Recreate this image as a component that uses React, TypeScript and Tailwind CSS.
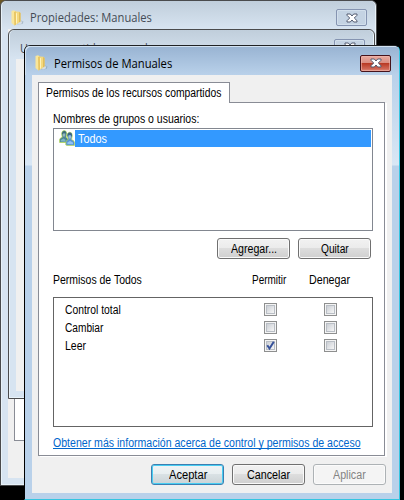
import { useLayoutEffect, useRef, useState } from 'react';

type LabelProps = { text: string; width: number; className?: string };

// A single line of text condensed or stretched to an exact width.
function Label({ text, width, className = '' }: LabelProps) {
  const ref = useRef<HTMLSpanElement>(null);
  const [scale, setScale] = useState(1);
  useLayoutEffect(() => {
    if (ref.current) setScale(width / ref.current.offsetWidth);
  }, [text, width]);
  return (
    <span className={`block h-4 shrink-0 whitespace-nowrap leading-4 ${className}`} style={{ width }}>
      <span ref={ref} className="inline-block origin-left" style={{ transform: `scaleX(${scale})` }}>
        {text}
      </span>
    </span>
  );
}

function FolderIcon() {
  return (
    <svg viewBox="0 0 16 16" className="block size-4 shrink-0">
      <path d="M8 14.5 12 10.5 14.5 11.5 13.5 14Z" fill="#64819c" opacity=".4" />
      <path d="M2.5 1 5 .3 7 1.5V14.5L5.5 15.5 2.5 13Z" fill="#f9e69a" />
      <path d="M5.2 2 6.8 1.3V14.7L5.5 15.5Z" fill="#e3bd58" />
      <path d="M6.8 1.6 10.5 1.8 11.5 3V12.2L7 14.5Z" fill="#f4d97e" />
      <path d="M7 3 8 3.2V13L7 14Z" fill="#fff3bd" />
      <path d="M10.2 2 11.5 3V12.2L10.2 12.8Z" fill="#dcb654" />
      <path d="M9 13.2 12 11.2 13.5 11.5 12.5 13.8 9.5 14.5Z" fill="#d6dde2" />
    </svg>
  );
}

function UsersIcon() {
  return (
    <svg viewBox="0 0 16 16" className="block size-4 shrink-0">
      <g stroke="#b9dd4a" strokeWidth=".7">
        <path d="M.6 12.5V9.5Q1 7.8 3.2 7.3L2.6 3.6Q3 .6 5.2.6T7.8 3.6L7.2 7.2 9.5 9.5V12.5Z" fill="#4b8496" />
        <path d="M6.8 15V12Q7 10.3 9.2 9.6L8.2 5.6Q8.4 2.2 10.8 2.2T13.3 5.6L12.6 9.6Q15.4 10.4 15.5 12.6V15.4H8Z" fill="#5893d2" />
      </g>
      <path d="M8.3 5.4Q8.6 2.6 10.8 2.6T13 5.4L12.6 7 11.8 5H9.6L9 7Z" fill="#3d6580" />
      <path d="M3 3.6Q3.3 1 5.2 1T7.4 3.4L6.4 3 4 4.6Z" fill="#3d6b78" />
      <ellipse cx="5" cy="5" rx="1.3" ry="1.8" fill="#93b7bd" />
      <ellipse cx="10.8" cy="7" rx="1.3" ry="1.8" fill="#9dbfd8" />
      <path d="M1.8 11.5V10L4.5 8.5 6.5 10V11.8Z" fill="#7db6c2" />
      <path d="M8.4 14V12.4L11 11 14 12.4V14.3Z" fill="#8fc1f4" />
    </svg>
  );
}

function CloseGlyph() {
  return (
    <svg viewBox="0 0 12 10" className="block h-[10px] w-3">
      <path d="M1 1H4.3L6 3 7.7 1H11V2.3L8.3 5 11 7.7V9H7.7L6 7 4.3 9H1V7.7L3.7 5 1 2.3Z" fill="#fff" stroke="#535b70" strokeWidth="1" />
    </svg>
  );
}

function CloseButton({ active = false }: { active?: boolean }) {
  return (
    <div
      className={`flex h-[17px] w-[31px] shrink-0 items-center justify-center rounded-[2px] border ${
        active
          ? 'border-[#46131b] bg-[linear-gradient(#e9aaa0_0%,#d98c80_47%,#b93a25_50%,#cf6655_85%,#df8b7c_100%)] shadow-[inset_0_0_0_1px_#f0b7ad99]'
          : 'border-[#8594b1] bg-[#c4d3e3] shadow-[inset_0_0_0_1px_#dce7f199]'
      }`}
    >
      <CloseGlyph />
    </div>
  );
}

type ButtonProps = { text: string; width: number; kind?: 'normal' | 'default' | 'disabled' };

function Button({ text, width, kind = 'normal' }: ButtonProps) {
  const look = {
    normal: 'border-[#707070] bg-[linear-gradient(#f2f2f2_0%,#ebebeb_48%,#dddddd_50%,#cfcfcf_100%)] shadow-[inset_0_0_0_1px_#fafafa] text-black',
    default: 'border-[#3c7fb1] bg-[linear-gradient(#f0f4f5_0%,#e8eef0_48%,#d9e1e4_50%,#cbd3d6_100%)] shadow-[inset_0_0_0_1px_#48cdf2] text-black',
    disabled: 'border-[#adb2b5] bg-[#f4f4f4] shadow-[inset_0_0_0_1px_#fbfbfb] text-[#838383]',
  }[kind];
  return (
    <button className={`flex h-[21px] w-[73px] shrink-0 items-center justify-center rounded-[3px] border ${look}`}>
      <Label text={text} width={width} />
    </button>
  );
}

function CheckBox({ checked = false }: { checked?: boolean }) {
  return (
    <span className="mt-[2px] flex size-[13px] shrink-0 items-center justify-center border border-[#8e8f8f] bg-[#f4f4f4]">
      <span className="block size-[9px] border border-[#b9bec5] bg-[linear-gradient(135deg,#cbcfd5,#f6f6f6)]">
        {checked && (
          <svg viewBox="0 0 9 9" className="-ml-px -mt-px block size-[9px] overflow-visible">
            <path d="M1.3 4.3 3.5 7.5 7.8 .8" fill="none" stroke="#36519a" strokeWidth="2" />
          </svg>
        )}
      </span>
    </span>
  );
}

const permissions = [
  { name: 'Control total', width: 56, allow: false },
  { name: 'Cambiar', width: 38, allow: false },
  { name: 'Leer', width: 21, allow: true },
];

export default function App() {
  return (
    <div className="relative h-[500px] w-[404px] overflow-hidden bg-black font-['Liberation_Sans',sans-serif] text-[12px] text-black">
      <div className="absolute left-0 top-0 size-2 bg-[#6b5624]" />
      <section className="absolute left-0 top-0 flex h-[486px] w-[377px] flex-col rounded-t-[6px] border border-[#4a4b4d] bg-[#d7e4f1] px-[7px] pb-[7px] shadow-[inset_0_0_0_1px_#e8f2f9]">
        <header className="-mx-[6px] flex h-7 shrink-0 items-center rounded-t-[5px] bg-[linear-gradient(#c0cedb,#d7e4f1)] pl-[7px] pr-[8px] pt-[5px]">
          <FolderIcon />
          <Label text="Propiedades: Manuales" width={122} className="ml-[5px] mt-px font-['Open_Sans',sans-serif] text-[#444b55]" />
          <div className="ml-auto"><CloseButton /></div>
        </header>
        <div className="flex flex-1 flex-col bg-[#f0f0f0] pb-[37px] pl-[6px] pr-2">
          <div className="flex-1 border border-[#898c95] bg-white" />
        </div>
      </section>

      <section className="absolute left-2 top-[29px] flex h-[370px] w-[367px] flex-col rounded-t-[6px] border border-[#4a4b4d] bg-[#d7e4f1] px-[7px] pb-[7px] shadow-[inset_0_0_0_1px_#e8f2f9]">
        <header className="-mx-[6px] flex h-[29px] shrink-0 items-center rounded-t-[5px] bg-[linear-gradient(#c0cedb,#d7e4f1)] pl-[10px] pr-[8px] pt-[5px]">
          <Label text="Uso compartido avanzado" width={134} className="mt-[3px] font-['Open_Sans',sans-serif] text-[#444b55]" />
          <div className="ml-auto"><CloseButton /></div>
        </header>
        <div className="flex-1 bg-[#f0f0f0]" />
      </section>

      <section className="absolute left-6 top-[45px] flex h-[455px] w-[376px] flex-col rounded-t-[6px] border border-b-[#36c5e0] border-l-black border-r-[#36c5e0] border-t-[#202225] bg-[linear-gradient(#b9d1ea_30px,#d9e7f5_119px,#b9d1ea_120px)] px-[7px] pb-[6px]">
        <header className="-mx-[7px] flex h-[29px] shrink-0 items-center rounded-t-[5px] bg-[linear-gradient(#98b3d2,#b9d1ea)] pl-2 pr-[8px] pt-[5px] shadow-[inset_1px_1px_0_#d2e2f1]">
          <FolderIcon />
          <Label text="Permisos de Manuales" width={118} className="ml-[5px] mt-px font-['Open_Sans',sans-serif]" />
          <div className="ml-auto"><CloseButton active /></div>
        </header>
        <main className="flex min-h-0 flex-1 flex-col bg-[#f0f0f0] pl-[6px] pr-[6px] pt-[7px]">
          <div className="relative z-10 -mb-px flex h-[21px] w-[192px] shrink-0 items-center border border-b-0 border-[#898c95] bg-white pl-[7px]">
            <Label text="Permisos de los recursos compartidos" width={175} />
          </div>
          <div className="flex h-[354px] w-[347px] shrink-0 flex-col border border-[#898c95] bg-white pl-[14px] pr-[9px] pt-[7px] shadow-[2px_1px_0_#fff]">
            <Label text="Nombres de grupos o usuarios:" width={146} className="mt-px" />
            <div className="mt-[1px] h-[103px] w-[320px] shrink-0 border border-[#828790] pl-[5px] pr-px pt-px">
              <div className="flex h-[17px]">
                <UsersIcon />
                <div className="flex h-[17px] flex-1 items-center bg-[#3399ff] pl-[3px] text-white">
                  <Label text="Todos" width={29} />
                </div>
              </div>
            </div>
            <div className="mt-[7px] flex shrink-0 gap-2 pl-[164px]">
              <Button text="Agregar..." width={46} />
              <Button text="Quitar" width={28} />
            </div>
            <div className="mt-[13px] flex h-4 shrink-0">
              <Label text="Permisos de Todos" width={89} />
              <Label text="Permitir" width={34} className="ml-[110px]" />
              <Label text="Denegar" width={41} className="ml-[23px]" />
            </div>
            <div className="mt-[9px] h-[130px] w-[320px] shrink-0 border border-[#646464] pl-[11px] pt-[3px]">
              {permissions.map((p) => (
                <div key={p.name} className="flex h-[18px]">
                  <Label text={p.name} width={p.width} className="mt-px" />
                  <span className="flex flex-1 justify-end gap-[47px] pr-[35px]">
                    <CheckBox checked={p.allow} />
                    <CheckBox />
                  </span>
                </div>
              ))}
            </div>
            <a className="mt-[8px] block h-4 w-[308px] shrink-0 text-[#0066cc]">
              <Label text="Obtener más información acerca de control y permisos de acceso" width={308} className="[&>span]:underline [&>span]:decoration-1 [&>span]:underline-offset-1 [&>span]:[text-decoration-skip-ink:none]" />
            </a>
          </div>
          <footer className="mt-[8px] flex shrink-0 justify-end gap-2">
            <Button text="Aceptar" width={38} kind="default" />
            <Button text="Cancelar" width={43} />
            <Button text="Aplicar" width={33} kind="disabled" />
          </footer>
        </main>
      </section>
    </div>
  );
}
